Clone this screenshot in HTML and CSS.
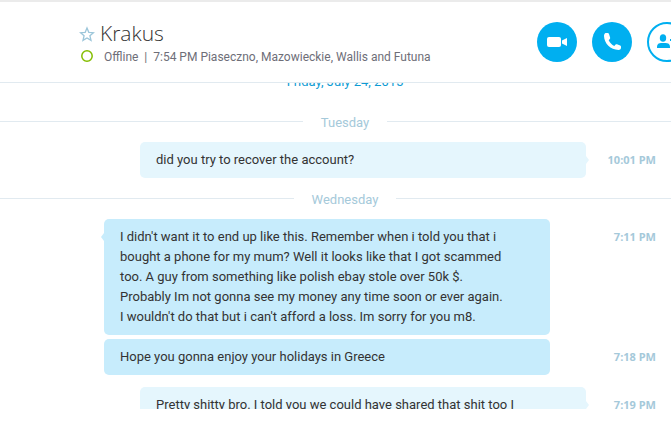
FILE: index.html
```html
<!DOCTYPE html>
<html lang="en">
<head>
  <meta charset="UTF-8" />
  <meta name="viewport" content="width=device-width, initial-scale=1.0" />
  <title>Krakus</title>
  <link rel="stylesheet" href="styles.css">
</head>
<body>

  <div class="app">
    <header class="chat-header">
      <div class="contact">
        <div class="contact-name">
          <button class="star" aria-label="Add to favorites">
            <svg width="16" height="16" viewBox="0 0 16 16" fill="none" stroke="#9cc6da" stroke-width="1.3">
              <path d="M8 2 9.800 6.300l4.600.4-3.500 3 1.100 4.600L8 11.900l-4 2.400 1.100-4.600-3.500-3 4.600-.4z" />
            </svg>
          </button>
          <h1>Krakus</h1>
        </div>
        <div class="contact-status">
          <svg width="12" height="12" viewBox="0 0 12 12" fill="none" stroke="#84bd00" stroke-width="1.500">
            <circle cx="6" cy="6" r="5.200" />
          </svg>
          <span class="status-text">Offline&nbsp; |&nbsp; 7:54 PM Piaseczno, Mazowieckie, Wallis and Futuna</span>
        </div>
      </div>

      <div class="actions">
        <button class="round" aria-label="Video call">
          <svg width="40" height="40" viewBox="0 0 40 40" fill="#fff">
            <rect x="10" y="15" width="14" height="10" rx="2" />
            <path d="M25 18.500 30 16v8l-5-2.500z" />
          </svg>
        </button>
        <button class="round" aria-label="Call">
          <svg width="40" height="40" viewBox="0 0 40 40" fill="#fff">
            <path d="M13.500 11C12.500 11.500 12 12.500 12 14c.3 7.500 6.500 13.700 14.500 14 1.500 0 2.300-.8 2.500-2v-1.300c0-.6-.3-.9-.8-1.100l-3.200-1.300c-.6-.2-1-.1-1.400.3l-1.300 1.300c-2.500-1.100-4.500-3.200-5.600-5.700l1.100-1.200c.4-.4.500-.8.3-1.400L17 12c-.2-.7-.6-1-1.300-1z" />
          </svg>
        </button>
        <button class="round outline" aria-label="Add people">
          <svg width="36" height="36" viewBox="2 2 36 36" fill="#00aff0">
            <ellipse cx="16" cy="16" rx="3.200" ry="3.800" />
            <path d="M10 26v-1.500c0-2.500 2-3.500 4-3.500h4.500c2.500 0 4.500 1 4.500 3.500V26z" />
            <path d="M23 17h3v-3h2v3h3v2h-3v3h-2v-3h-3z" />
          </svg>
        </button>
      </div>
    </header>

    <main class="log">
      <div class="day first"><a href="#">Friday, July 24, 2015</a></div>

      <div class="day line"><span>Tuesday</span></div>
      <div class="message mine">
        <p class="bubble tail">did you try to recover the account?</p>
        <time>10:01 PM</time>
      </div>

      <div class="day line"><span>Wednesday</span></div>
      <div class="message">
        <p class="bubble tail">I didn't want it to end up like this. Remember when i told you that i<br>bought a phone for my mum? Well it looks like that I got scammed<br>too. A guy from something like polish ebay stole over 50k $.<br>Probably Im not gonna see my money any time soon or ever again.<br>I wouldn't do that but i can't afford a loss. Im sorry for you m8.</p>
        <time>7:11 PM</time>
      </div>
      <div class="message next">
        <p class="bubble">Hope you gonna enjoy your holidays in Greece</p>
        <time>7:18 PM</time>
      </div>
      <div class="message mine reply">
        <p class="bubble tail">Pretty shitty bro. I told you we could have shared that shit too I</p>
        <time>7:19 PM</time>
      </div>
    </main>
  </div>

</body>
</html>
```

FILE: styles.css
```css
* {
  box-sizing: border-box;
}
body {
  margin: 0;
  background: #fff;
  color: #333;
  font-family: Roboto, "Noto Sans", sans-serif;
  font-size: 13px;
  line-height: 20px;
  overflow: hidden;
}
button {
  padding: 0;
  border: none;
  background: none;
  cursor: pointer;
}
svg {
  display: block;
}

/* the conversation pane runs a little past the right edge of the window */
.app {
  display: flex;
  flex-direction: column;
  height: 100vh;
  margin-right: -19px;
  padding-bottom: 12px;
}

/* header */
.chat-header {
  display: flex;
  justify-content: space-between;
  flex: none;
  padding: 20px 3px 16px 79px;
  border-top: 2px solid #ebebeb;
  border-bottom: 1px solid #e1eaf0;
}
.contact-name {
  display: flex;
  align-items: center;
  gap: 5px;
  height: 24px;
}
h1 {
  margin: 0;
  font-family: "Open Sans", sans-serif;
  font-size: 21px;
  font-weight: 300;
  line-height: 22px;
  padding-bottom: 2px;
}
.contact-status {
  display: flex;
  align-items: center;
  gap: 11px;
  padding-left: 2px;
  color: #6e6e78;
  font-size: 12px;
  white-space: nowrap;
}
.status-text {
  padding-top: 2px;
  line-height: 18px;
}
.actions {
  display: flex;
  gap: 15px;
}
.round {
  width: 40px;
  height: 40px;
  border-radius: 50%;
  background: #00aff0;
}
.outline {
  border: 2px solid #00aff0;
  background: #fff;
}

/* messages */
.log {
  flex: 1;
  display: flex;
  flex-direction: column;
  min-height: 0;
  overflow: hidden;
}
.day {
  display: flex;
  align-items: center;
  justify-content: center;
  flex: none;
  gap: 18px;
  margin: 9px 0;
  color: #a5c9da;
}
.day span,
.day a {
  padding-top: 3px;
}
.day a {
  color: #0e9bd3;
  text-decoration: none;
}
.day.first {
  margin-top: -14px;
}
.line::before,
.line::after {
  content: "";
  flex: 1;
  height: 1px;
  background: #e1eaf0;
}
.message {
  display: flex;
  flex: none;
  padding: 0 34px 0 104px;
}
.next {
  margin-top: 4px;
}
.reply {
  margin-top: 12px;
}
.bubble {
  position: relative;
  flex: 1;
  margin: 0 36px 0 0;
  padding: 8px 16px;
  border-radius: 5px;
  background: #c7ecfc;
}
.mine .bubble {
  margin: 0 0 0 36px;
  background: #e5f6fd;
}
.tail::before {
  content: "";
  position: absolute;
  top: 14px;
  right: 100%;
  border: 4px solid transparent;
  border-left: none;
  border-right: 3px solid #c7ecfc;
}
.mine .tail::before {
  right: auto;
  left: 100%;
  border-right: none;
  border-left: 3px solid #e5f6fd;
}
time {
  width: 70px;
  padding-top: 8px;
  color: #a5c9da;
  font-family: "Open Sans", sans-serif;
  font-size: 11px;
  font-weight: bold;
  text-align: right;
}
```
